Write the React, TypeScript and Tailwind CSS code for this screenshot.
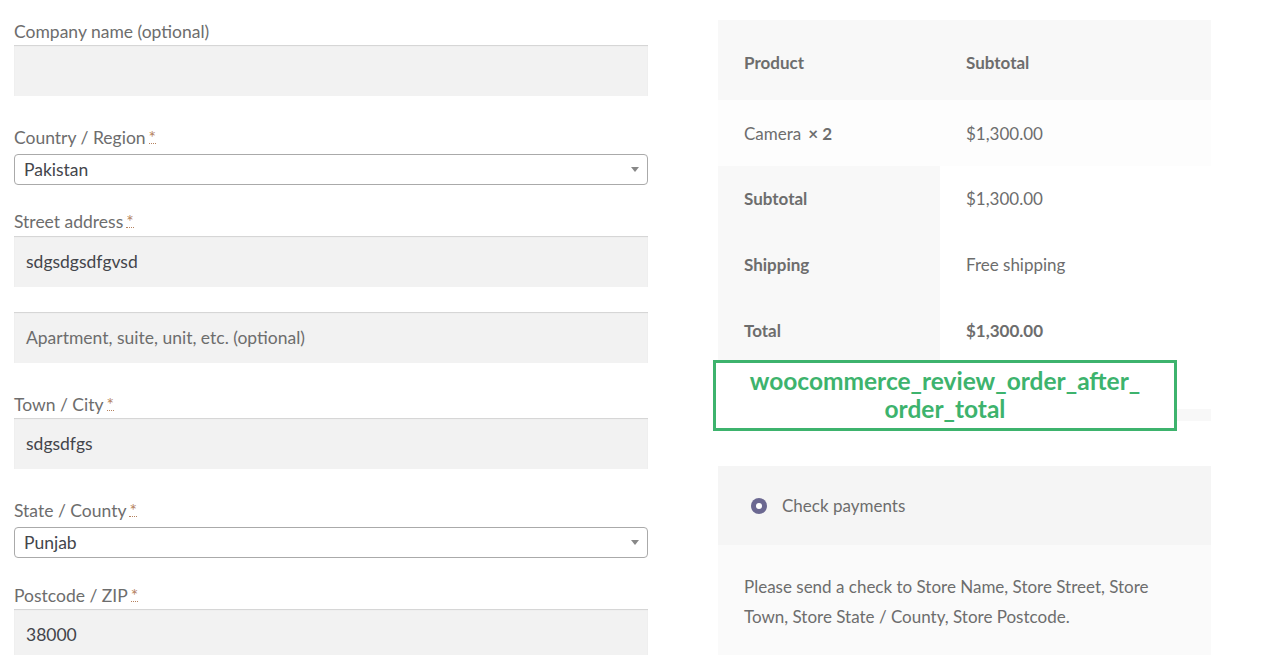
import React from 'react'

const Req = () => (
  <abbr
    title="required"
    className="ml-[3px] no-underline text-[#b5825f] border-b border-dotted border-[#b5825f] leading-[10px] inline-block"
  >
    *
  </abbr>
)

function Label({ text, required, className = '' }: { text: string; required?: boolean; className?: string }) {
  return (
    <label className={`block h-[26px] text-[17.5px] leading-[27px] text-[#6d6d6d] ${className}`}>
      {text}
      {required && <Req />}
    </label>
  )
}

function TextInput({ value, placeholder, className = '' }: { value?: string; placeholder?: string; className?: string }) {
  return (
    <div
      className={`h-[51px] w-full bg-[#f2f2f2] shadow-[inset_0_1px_1px_rgba(0,0,0,0.13)] px-[12px] pt-[1px] flex items-center text-[17.5px] ${className}`}
    >
      {value ? (
        <span className="text-[#43454b]">{value}</span>
      ) : (
        <span className="text-[#6d6d6d]">{placeholder}</span>
      )}
    </div>
  )
}

function SelectBox({ value, className = '' }: { value: string; className?: string }) {
  return (
    <div
      className={`h-[31px] w-full border border-[#aaaaaa] rounded-[4px] bg-white flex items-center justify-between pl-[9px] pr-[8px] pt-[2px] text-[17.5px] text-[#43454b] ${className}`}
    >
      <span>{value}</span>
      <span className="-mt-[2px] w-0 h-0 border-l-[4px] border-r-[4px] border-t-[5px] border-l-transparent border-r-transparent border-t-[#888888]" />
    </div>
  )
}

export default function App() {
  return (
    <div className="w-[1263px] h-[655px] overflow-hidden bg-white flex font-['Lato',sans-serif] text-[#6d6d6d]">
      {/* billing fields */}
      <div className="ml-[14px] w-[634px] pt-[18px] shrink-0">
        <Label text="Company name (optional)" />
        <TextInput className="mt-[1px]" />

        <Label text="Country / Region" required className="mt-[28px]" />
        <SelectBox value="Pakistan" className="mt-[4px]" />

        <Label text="Street address" required className="mt-[23px]" />
        <TextInput value="sdgsdgsdfgvsd" className="mt-[2px]" />
        <TextInput placeholder="Apartment, suite, unit, etc. (optional)" className="mt-[25px]" />

        <Label text="Town / City" required className="mt-[28px]" />
        <TextInput value="sdgsdfgs" className="mt-[1px]" />

        <Label text="State / County" required className="mt-[28px]" />
        <SelectBox value="Punjab" className="mt-[4px]" />

        <Label text="Postcode / ZIP" required className="mt-[24px]" />
        <TextInput value="38000" className="mt-[1px]" />
      </div>

      {/* order review */}
      <div className="ml-[70px] w-[493px] pt-[20px] shrink-0 text-[17px]">
        <div className="grid grid-cols-[222px_1fr]">
          <div className="h-[80px] bg-[#f8f8f8] pl-[26px] pt-[5px] flex items-center font-bold">Product</div>
          <div className="h-[80px] bg-[#f8f8f8] pl-[26px] pt-[5px] flex items-center font-bold">Subtotal</div>

          <div className="h-[66px] bg-[#fdfdfd] pl-[26px] pt-[1px] flex items-center">
            Camera <strong className="ml-[7px]">× 2</strong>
          </div>
          <div className="h-[66px] bg-[#fdfdfd] pl-[26px] pt-[1px] flex items-center">$1,300.00</div>

          <div className="h-[66px] bg-[#f8f8f8] pl-[26px] flex items-center font-bold">Subtotal</div>
          <div className="h-[66px] pl-[26px] flex items-center">$1,300.00</div>

          <div className="h-[66px] bg-[#f8f8f8] pl-[26px] flex items-center font-bold">Shipping</div>
          <div className="h-[66px] pl-[26px] flex items-center">Free shipping</div>

          <div className="h-[66px] bg-[#f8f8f8] pl-[26px] flex items-center font-bold">Total</div>
          <div className="h-[66px] pl-[26px] flex items-center font-bold">$1,300.00</div>
        </div>

        {/* hook marker */}
        <div className="flex items-start -mt-[4px] -ml-[5px]">
          <div className="w-[464px] h-[71px] shrink-0 border-[3px] border-[#3db36d] bg-white pb-[2px] flex items-center justify-center text-center text-[24.5px] leading-[28px] font-bold text-[#3db36d]">
            woocommerce_review_order_after_
            <br />
            order_total
          </div>
          <div className="mt-[49px] h-[12px] flex-1 bg-[#f8f8f8]" />
        </div>

        {/* payment */}
        <div className="mt-[35px]">
          <div className="h-[79px] bg-[#f5f5f5] pl-[33px] flex items-center">
            <span className="w-[16px] h-[16px] rounded-full bg-[#6b6891] flex items-center justify-center">
              <span className="w-[6px] h-[6px] rounded-full bg-white" />
            </span>
            <span className="ml-[15px]">Check payments</span>
          </div>
          <div className="bg-[#fafafa] pt-[27px] pb-[30px] pl-[26px] pr-[20px] leading-[30px]">
            Please send a check to Store Name, Store Street, Store
            <br />
            Town, Store State / County, Store Postcode.
          </div>
        </div>
      </div>
    </div>
  )
}
